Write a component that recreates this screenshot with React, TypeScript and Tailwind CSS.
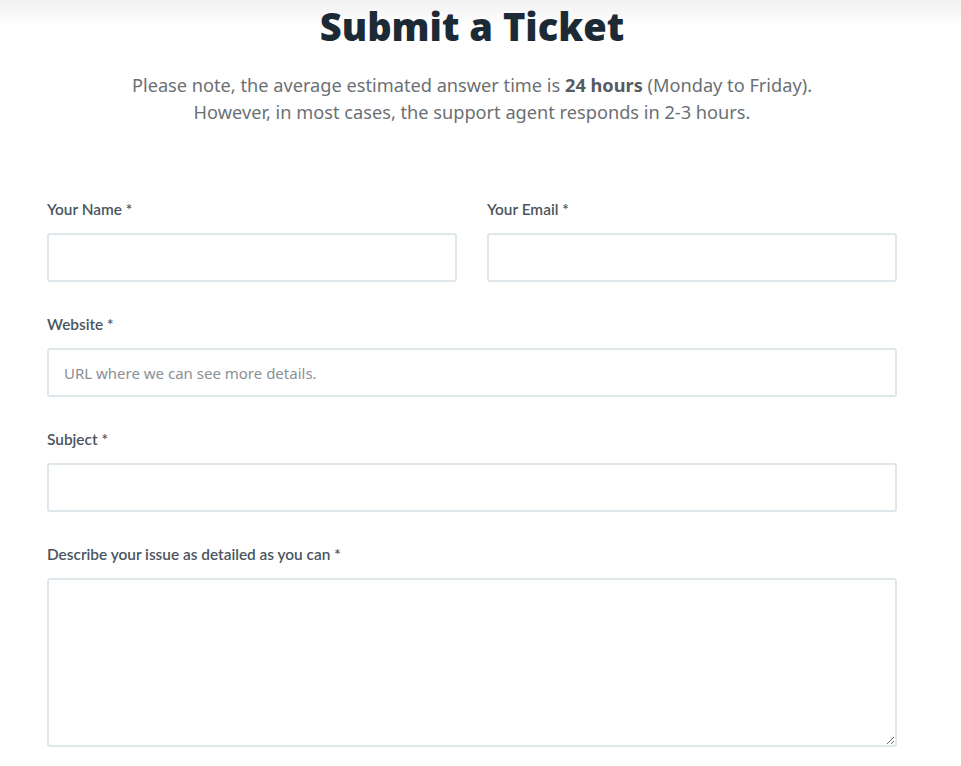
import { useState } from 'react';

// Simple labelled field wrapper
function Field({ label, children }: { label: string; children: React.ReactNode }) {
  return (
    <div className="flex flex-col">
      <label className="text-[15.4px] leading-5 font-semibold text-[#4a5560] mb-[14px] font-['Lato',sans-serif]">
        {label}
      </label>
      {children}
    </div>
  );
}

const inputCls =
  "h-[49px] w-full rounded-[3px] border-2 border-[#dfe7ea] bg-white px-[15px] text-[15px] text-gray-700 outline-none placeholder:text-[#8a9096] font-['Noto_Sans',sans-serif]";

export default function App() {
  const [form, setForm] = useState({ name: '', email: '', website: '', subject: '', issue: '' });

  const set = (key: keyof typeof form) => (e: React.ChangeEvent<HTMLInputElement | HTMLTextAreaElement>) =>
    setForm({ ...form, [key]: e.target.value });

  return (
    <div className="min-h-[766px] bg-white bg-[linear-gradient(to_bottom,#f1f1f1,#ffffff_26px)]">
      <div className="pl-[47px] pt-[3px]">
        <div className="w-[850px]">
          {/* Header */}
          <h1 className="text-center text-[38px] leading-[46px] font-black text-[#1c2a36] font-['Noto_Sans',sans-serif]">
            Submit a Ticket
          </h1>
          <p className="mt-[23px] text-center text-[18.2px] leading-[27px] text-[#6b7074] font-['Noto_Sans',sans-serif]">
            Please note, the average estimated answer time is <strong className="font-bold text-[#555b60]">24 hours</strong> (Monday to Friday).
            <br />
            However, in most cases, the support agent responds in 2-3 hours.
          </p>

          {/* Form */}
          <form className="mt-[73px] flex flex-col gap-[32px]" onSubmit={e => e.preventDefault()}>
            <div className="grid grid-cols-2 gap-[30px]">
              <Field label="Your Name *">
                <input className={inputCls} value={form.name} onChange={set('name')} />
              </Field>
              <Field label="Your Email *">
                <input className={inputCls} value={form.email} onChange={set('email')} />
              </Field>
            </div>
            <Field label="Website *">
              <input
                className={inputCls}
                placeholder="URL where we can see more details."
                value={form.website}
                onChange={set('website')}
              />
            </Field>
            <Field label="Subject *">
              <input className={inputCls} value={form.subject} onChange={set('subject')} />
            </Field>
            <Field label="Describe your issue as detailed as you can *">
              <textarea
                className="h-[169px] w-full rounded-[3px] border-2 border-[#dfe7ea] bg-white px-[15px] py-[12px] text-[15px] text-gray-700 outline-none font-['Noto_Sans',sans-serif]"
                value={form.issue}
                onChange={set('issue')}
              />
            </Field>
          </form>
        </div>
      </div>
    </div>
  );
}
